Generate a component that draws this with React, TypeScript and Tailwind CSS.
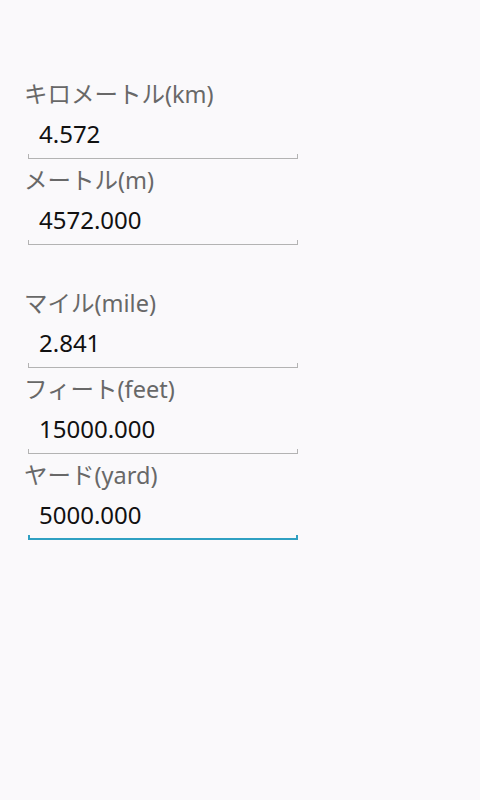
import React from "react";

type Field = { label: string; value: string; focused?: boolean };

const groups: Field[][] = [
  [
    { label: "キロメートル(km)", value: "4.572" },
    { label: "メートル(m)", value: "4572.000" },
  ],
  [
    { label: "マイル(mile)", value: "2.841" },
    { label: "フィート(feet)", value: "15000.000" },
    { label: "ヤード(yard)", value: "5000.000", focused: true },
  ],
];

function UnitField({ label, value, focused }: Field) {
  return (
    <div className="pb-[5px]">
      <div className="h-[32px] text-[23.5px] leading-[32px] text-[#686868]">{label}</div>
      <div className="ml-1 w-[270px] pt-[8px]">
        <div className="h-[32px] pl-[11px] text-[24px] leading-[32px] text-[#111111]">{value}</div>
        {focused ? (
          <div className="mt-[4px] h-[5px] border-x-2 border-b-2 border-[#2fa0c2]" />
        ) : (
          <div className="mt-[4px] h-[5px] border-x border-b border-[#b3b3b3]" />
        )}
      </div>
    </div>
  );
}

export default function App() {
  return (
    <div
      className="min-h-[800px] w-[480px] bg-[#faf9fb] px-6 pt-[78px]"
      style={{ fontFamily: '"Noto Sans", "Noto Sans CJK JP", sans-serif' }}
    >
      {groups.map((group, gi) => (
        <div key={gi} className={gi > 0 ? "mt-[37px]" : ""}>
          {group.map((f) => (
            <UnitField key={f.label} {...f} />
          ))}
        </div>
      ))}
    </div>
  );
}
